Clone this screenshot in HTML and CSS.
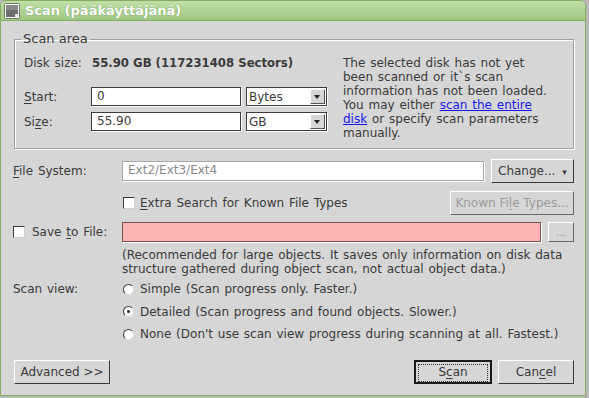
FILE: index.html
```html
<!DOCTYPE html>
<html lang="fi">
<head>
    <meta charset="UTF-8">
    <title>Scan (pääkäyttäjänä)</title>
    <link rel="stylesheet" href="styles.css">
</head>
<body>
    <div class="window">
        <div class="titlebar">
            <svg class="app-icon" width="16" height="16" viewBox="0 0 16 16">
                <rect x="0.5" y="0.5" width="15" height="15" rx="1" fill="#f2f2f2" stroke="#6f7a66"/>
                <rect x="2" y="2" width="12" height="12" fill="#6d6d6d"/>
                <rect x="2" y="2" width="12" height="5" fill="#8a8a8a"/>
                <rect x="11" y="11" width="3" height="3" fill="#e8e8e8"/>
            </svg>
            <span class="title">Scan (pääkäyttäjänä)</span>
        </div>

        <div class="content">
            <fieldset class="scan-area">
                <legend>Scan area</legend>
                <div class="area-grid">
                    <div class="area-fields">
                        <div class="disk-row">
                            <span class="field-label">Disk size:</span>
                            <b class="disk-value">55.90 GB (117231408 Sectors)</b>
                        </div>
                        <div class="field-row">
                            <span class="field-label"><u>S</u>tart:</span>
                            <div class="text-input">0</div>
                            <div class="combo"><span>Bytes</span><span class="combo-btn"></span></div>
                        </div>
                        <div class="field-row">
                            <span class="field-label">Si<u>z</u>e:</span>
                            <div class="text-input">55.90</div>
                            <div class="combo"><span>GB</span><span class="combo-btn"></span></div>
                        </div>
                    </div>
                    <p class="area-note">
                        The selected disk has not yet been scanned or it`s scan
                        information has not been loaded. You may either
                        <a href="#">scan the entire disk</a> or specify scan parameters manually.
                    </p>
                </div>
            </fieldset>

            <div class="form-row fs-row">
                <span class="row-label"><u>F</u>ile System:</span>
                <div class="text-input readonly fs-input">Ext2/Ext3/Ext4</div>
                <button class="btn change-btn">Change... <span class="arrow">&#9662;</span></button>
            </div>

            <div class="form-row extra-row">
                <span class="check"></span>
                <span class="check-text"><u>E</u>xtra Search for Known File Types</span>
                <button class="btn known-btn" disabled>Known Fi<u>l</u>e Types...</button>
            </div>

            <div class="form-row save-row">
                <span class="check"></span>
                <span class="save-label">Save <u>t</u>o File:</span>
                <div class="text-input invalid save-input"></div>
                <button class="btn dots-btn" disabled>...</button>
            </div>

            <p class="save-note">
                (Recommended for large objects. It saves only information on disk data
                structure gathered during object scan, not actual object data.)
            </p>

            <div class="view-grid">
                <span class="view-label">Scan view:</span>
                <div class="radios">
                    <div class="radio-row"><span class="radio"></span>Simple (Scan progress only. Faster.)</div>
                    <div class="radio-row"><span class="radio checked"></span>Detailed (Scan progress and found objects. Slower.)</div>
                    <div class="radio-row"><span class="radio"></span>None (Don't use scan view progress during scanning at all. Fastest.)</div>
                </div>
            </div>

            <div class="button-bar">
                <button class="btn advanced-btn">Advanced &gt;&gt;</button>
                <button class="btn default-btn"><span class="focus">S<u>c</u>an</span></button>
                <button class="btn cancel-btn">Can<u>c</u>el</button>
            </div>
        </div>
    </div>
</body>
</html>
```

FILE: styles.css
```css
body {
    margin: 0;
    background-color: #b9b9b9;
    font-family: "DejaVu Sans", sans-serif;
    font-size: 12px;
    word-spacing: 1px;
    color: #3a3a3a;
}

.window {
    width: 584px;
    height: 394px;
    border: 1px solid #86ac63;
    border-radius: 6px 6px 0 0;
    background-color: #d6d6d6;
    display: flex;
    flex-direction: column;
    overflow: hidden;
}

.titlebar {
    height: 19px;
    border-bottom: 1px solid #88ae66;
    background: linear-gradient(#bfe0a6, #9fc682);
    display: flex;
    align-items: center;
    padding-left: 3px;
}

.app-icon {
    margin-right: 5px;
}

.title {
    font-weight: bold;
    font-size: 13px;
    word-spacing: 0;
    color: #fff;
    text-shadow: 0 0 1px rgba(60, 90, 40, 0.6);
}

.content {
    padding: 0 11px 0 12px;
}

u {
    text-decoration-thickness: 1px;
    text-underline-offset: 2px;
}

/* scan area group */
.scan-area {
    margin: 11px 0 0 1px;
    padding: 10px 0 8px 9px;
    border: 1px solid #9e9e9e;
    box-shadow: inset 1px 1px #fff, 1px 1px #fff;
    min-inline-size: 0;
}

.scan-area legend {
    padding: 0 2px;
    margin-left: -3px;
    font-size: 13px;
    line-height: 14px;
    word-spacing: 0;
}

.area-grid {
    display: flex;
    gap: 16px;
}

.area-fields {
    display: flex;
    flex-direction: column;
}

.disk-row {
    display: flex;
    height: 14px;
    line-height: 14px;
    margin-bottom: 17px;
}

.field-label {
    width: 68px;
}

.disk-value {
    font-size: 11.7px;
    word-spacing: 0;
}

.field-row {
    display: flex;
    align-items: center;
    margin-bottom: 6px;
}

.field-row:last-child {
    margin-bottom: 0;
}

.field-row .field-label {
    width: 67px;
}

.text-input {
    box-sizing: border-box;
    height: 19px;
    width: 150px;
    padding: 0 5px;
    line-height: 17px;
    background-color: #fff;
    border: 1px solid #3c3c3c;
    box-shadow: 1px 1px 0 #fff;
}

.combo {
    box-sizing: border-box;
    height: 19px;
    width: 81px;
    margin-left: 5px;
    padding-left: 2px;
    display: flex;
    align-items: center;
    justify-content: space-between;
    background-color: #fff;
    border: 1px solid #3c3c3c;
    box-shadow: 1px 1px 0 #fff;
}

.combo-btn {
    width: 15px;
    height: 15px;
    margin-right: 1px;
    box-sizing: border-box;
    background-color: #d6d6d6;
    border: 1px solid;
    border-color: #fff #555 #555 #fff;
    position: relative;
}

.combo-btn::after {
    content: "";
    position: absolute;
    left: 3px;
    top: 5px;
    border: 3px solid transparent;
    border-top: 4px solid #222;
    border-bottom: 0;
}

.area-note {
    width: 214px;
    margin: 0;
    line-height: 14px;
}

.area-note a {
    color: #1818ee;
}

/* rows under the group */
.form-row {
    display: flex;
    align-items: center;
    height: 24px;
}

.fs-row {
    margin-top: 10px;
}

.row-label {
    width: 109px;
}

.readonly {
    color: #8a8a8a;
    border-color: #a8a8a8;
}

.fs-input {
    width: 362px;
    height: 20px;
}

.btn {
    box-sizing: border-box;
    height: 24px;
    padding: 0;
    font-family: "DejaVu Sans", sans-serif;
    font-size: 12px;
    color: #3a3a3a;
    background-color: #d6d6d6;
    border: 1px solid;
    border-color: #fff #3a3a3a #3a3a3a #fff;
}

.btn:disabled {
    color: #9c9c9c;
    border-color: #fff #6a6a6a #6a6a6a #fff;
}

.change-btn {
    width: 83px;
    margin-left: auto;
    text-align: left;
    padding-left: 6px;
}

.change-btn .arrow {
    font-size: 9px;
    margin-left: 3px;
}

.extra-row {
    margin-top: 8px;
}

.check {
    box-sizing: border-box;
    width: 12px;
    height: 12px;
    background-color: #fff;
    border: 1px solid;
    border-color: #3a3a3a #cfcfcf #cfcfcf #3a3a3a;
}

.extra-row .check {
    margin-left: 110px;
}

.check-text {
    margin-left: 5px;
}

.known-btn {
    width: 124px;
    margin-left: auto;
}

.save-row {
    margin-top: 7px;
    height: 20px;
}

.save-label {
    margin-left: 7px;
    width: 90px;
}

.invalid {
    background-color: #ffb4b4;
    border-color: #7a5050;
}

.save-input {
    width: 419px;
    height: 20px;
}

.dots-btn {
    width: 26px;
    height: 20px;
    margin-left: auto;
    font-size: 10px;
}

.save-note {
    margin: 6px 0 0 109px;
    line-height: 14px;
}

.view-grid {
    display: flex;
    margin-top: 2px;
}

.view-label {
    width: 110px;
    padding-top: 4px;
}

.radio-row {
    display: flex;
    align-items: center;
    height: 22.5px;
}

.radio {
    box-sizing: border-box;
    width: 11px;
    height: 11px;
    margin-right: 6px;
    border-radius: 50%;
    background-color: #fff;
    border: 1px solid;
    border-color: #3a3a3a #ddd #ddd #3a3a3a;
    position: relative;
}

.radio.checked::after {
    content: "";
    position: absolute;
    left: 3px;
    top: 3px;
    width: 3px;
    height: 3px;
    border-radius: 50%;
    background-color: #222;
}

.button-bar {
    display: flex;
    margin-top: 14px;
}

.advanced-btn {
    width: 96px;
    margin-left: 1px;
}

.default-btn {
    width: 78px;
    margin-left: auto;
    border: 2px solid #1a1a1a;
    padding: 2px;
}

.default-btn .focus {
    display: block;
    height: 16px;
    line-height: 15px;
    border: 1px dotted #333;
}

.cancel-btn {
    width: 76px;
    margin-left: 6px;
}
```
